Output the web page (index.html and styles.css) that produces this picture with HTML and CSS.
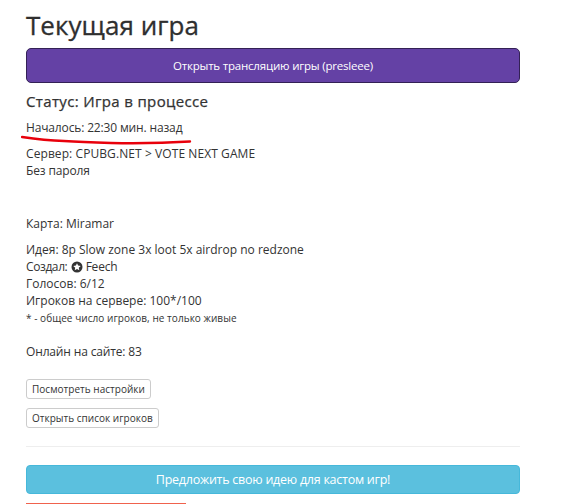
FILE: index.html
```
<!DOCTYPE html>
<html lang="ru">
<head>
<meta charset="utf-8">
<title>Текущая игра</title>
<link rel="stylesheet" href="styles.css">
</head>
<body>
<main class="content">
  <h1 class="title">Текущая игра</h1>
  <a class="btn btn-wide btn-purple">Открыть трансляцию игры (presleee)</a>
  <h4 class="status">Статус: Игра в процессе</h4>
  <p class="started"><span class="tight">Началось: 22:30 мин. назад</span>
    <svg class="scribble" width="180" height="14" viewBox="0 0 180 14"><path d="M1 2 C 15 4 30 5.500 43 6 C 60 7 75 7.500 90 8 C 115 8.500 145 8 169 6.500" fill="none" stroke="#e8000b" stroke-width="2.400" stroke-linecap="round"/></svg>
  </p>
  <p class="server"><span class="wide">Сервер: CPUBG.NET &gt; VOTE NEXT GAME</span><br><span class="tight">Без пароля</span></p>
  <p class="map">Карта: Miramar</p>
  <p class="idea">Идея: 8p Slow zone 3x loot 5x airdrop no redzone<br>
    <span class="author">Создал:</span> <svg class="medal" width="12" height="12" viewBox="0 0 12 12"><circle cx="6" cy="6" r="5.500" fill="#333"/><path d="M6 2.200 7.100 4.600 9.700 4.900 7.800 6.700 8.300 9.300 6 8 3.700 9.300 4.200 6.700 2.300 4.900 4.900 4.600Z" fill="#fff"/></svg> <span class="author-name">Feech</span><br>
    Голосов: 6/12<br>
    Игроков на сервере: 100*/100<br>
    <small class="note">* - общее число игроков, не только живые</small></p>
  <p class="online tight">Онлайн на сайте: 83</p>
  <div class="small-actions">
    <a class="btn btn-small">Посмотреть настройки</a>
    <a class="btn btn-small">Открыть список игроков</a>
  </div>
  <hr class="rule">
  <a class="btn btn-wide btn-info">Предложить свою идею для кастом игр!</a>
  <div class="cut-bar"></div>
</main>
</body>
</html>
```
FILE: styles.css
```
* { box-sizing: border-box; }
html, body { margin: 0; height: 504px; overflow: hidden; background: #fff; }
body { font: 12px/17px "Open Sans", "Noto Sans", sans-serif; color: #333; }
.content { width: 494px; margin-left: 26px; padding-top: 10px; }
.title { margin: 0 0 8px; font-size: 26px; line-height: 30px; font-weight: 400; letter-spacing: 0.050px; -webkit-text-stroke: 0.300px #2f2f2f; color: #2f2f2f; }
.btn { display: block; text-align: center; text-decoration: none; }
.btn-wide { height: 35px; line-height: 33px; border: 1px solid; border-radius: 5px; color: #fff; }
.btn-purple { background: #6441a5; border-color: #332155; font-size: 11.500px; letter-spacing: -0.200px; }
.btn-info { background: #5bc0de; border-color: #46b8da; height: 29px; line-height: 27px; border-radius: 4px; font-size: 12.500px; letter-spacing: -0.250px; margin-top: 18px; }
.status { margin: 9px 0 9px; font-size: 15px; line-height: 18px; font-weight: 400; letter-spacing: 0.350px; -webkit-text-stroke: 0.250px #333; color: #333; }
p { margin: 0 0 9px; }
.started { position: relative; }
.tight { letter-spacing: -0.150px; }
.wide { letter-spacing: 0.080px; }
.author { letter-spacing: -0.400px; }
.author-name { letter-spacing: -0.200px; }
.scribble { position: absolute; left: -5px; top: 16px; }
.server { margin-bottom: 36px; }
.note { font-size: 10px; letter-spacing: 0.050px; }
.online { margin-top: 16px; margin-bottom: 19px; }
.idea { margin-bottom: 0; }
.medal { vertical-align: -2px; }
.small-actions { display: flex; flex-direction: column; align-items: flex-start; gap: 9px; }
.btn-small { height: 20px; line-height: 18px; padding: 0 5px; border: 1px solid #ccc; border-radius: 3px; font-size: 10px; letter-spacing: 0.020px; color: #333; }
.rule { margin: 18px 0 0; border: 0; border-top: 1px solid #eee; }
.cut-bar { margin-top: 9px; width: 160px; height: 1px; background: #f0624d; }
```
